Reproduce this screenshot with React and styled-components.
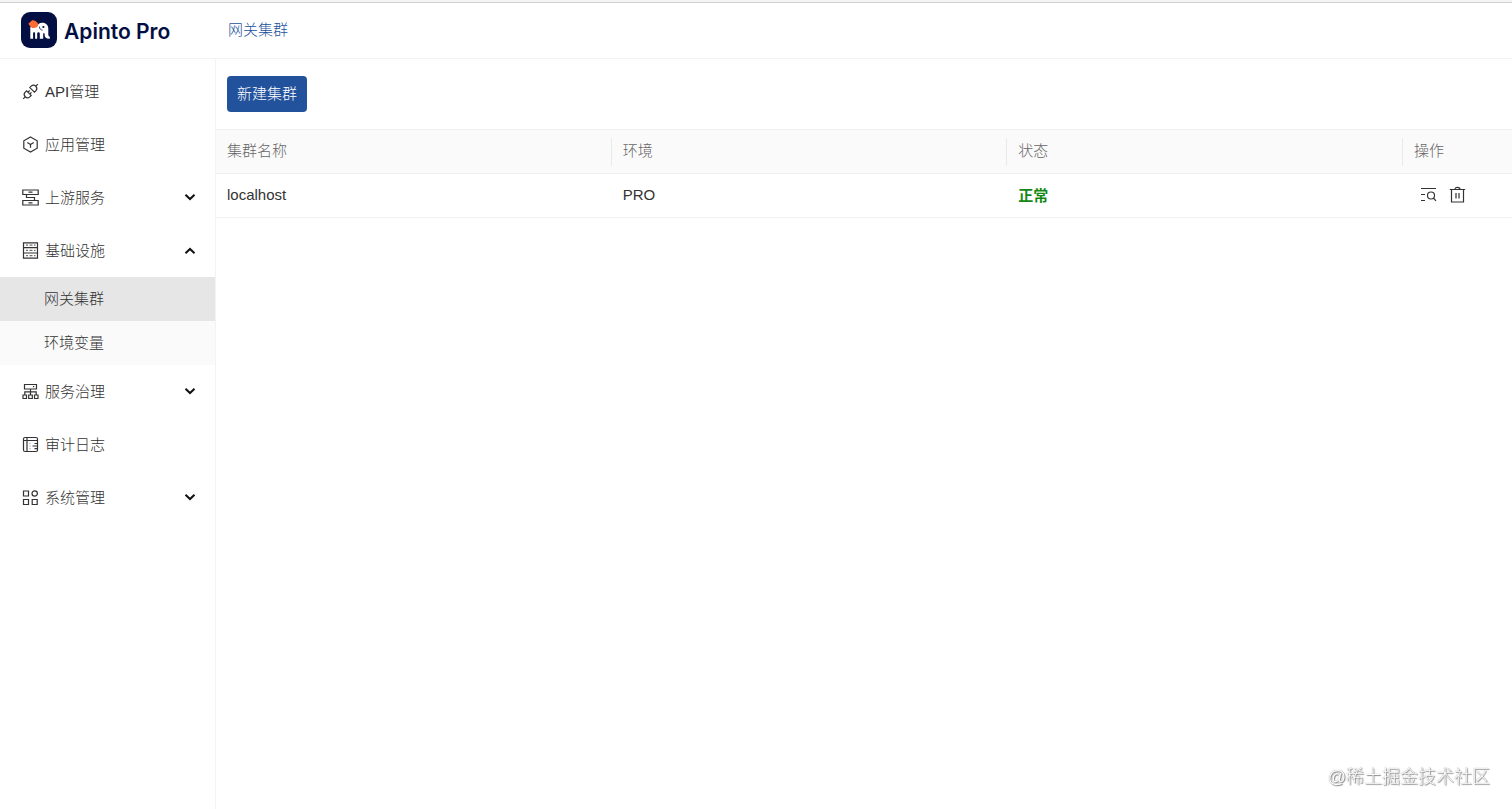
import React, { useState } from 'react'
import styled, { createGlobalStyle } from 'styled-components'

const menu = [
  { label: 'API管理', icon: 'plug' },
  { label: '应用管理', icon: 'app' },
  { label: '上游服务', icon: 'upstream', children: [] },
  { label: '基础设施', icon: 'infra', children: ['网关集群', '环境变量'] },
  { label: '服务治理', icon: 'tree', children: [] },
  { label: '审计日志', icon: 'log' },
  { label: '系统管理', icon: 'system', children: [] },
]

const clusters = [{ name: 'localhost', env: 'PRO', status: '正常' }]

const icons = {
  plug: (
    <>
      <path d="M1.2 15.8l2-2M13.8 3.200l2-2" />
      <path d="M3.200 13.800c-1.300-1.500-1.200-3.400 0-4.600l1.400-1.400 4.600 4.600-1.400 1.400c-1.200 1.200-3.100 1.400-4.600 0z" />
      <path d="M13.800 3.200c1.300 1.500 1.200 3.400 0 4.600l-1.400 1.400-4.600-4.600 1.400-1.400c1.200-1.200 3.100-1.400 4.600 0z" />
      <path d="M6 9.200l1.700-1.700M7.800 11l1.700-1.700" />
    </>
  ),
  app: (
    <>
      <path d="M8.5 1l6.700 3.800v7.400L8.5 16l-6.700-3.800V4.800z" />
      <path d="M5.300 6.500l3.200 2 3.200-2M8.5 8.500v3.300" />
    </>
  ),
  upstream: (
    <>
      <path d="M.8 1h15.400v4.500H.8zM.8 11.500h15.400V16H.8z" />
      <path d="M6.500 3.200h4M6.500 13.800h4M4.500 5.500v3h8v3" />
    </>
  ),
  infra: (
    <>
      <path d="M1.500 .8h14v4.900h-14zM1.500 5.700h14v5.300h-14zM1.500 11h14v5.200h-14z" />
      <path d="M4 3.200h2M7.500 3.200h3M12 3.200h1.500M4 8.400h2M7.500 8.400h3M12 8.400h1.500M4 13.600h2M7.500 13.600h3M12 13.600h1.500" opacity="0.7" />
    </>
  ),
  tree: (
    <>
      <path d="M2.500 1.500h12V6h-12zM8.500 6v6M2.800 12V8.800h11.400V12" />
      <path d="M1 12h3.500v3.500H1zM6.700 12h3.600v3.500H6.700zM12.500 12H16v3.500h-3.500zM11 3.700h1.200" />
    </>
  ),
  log: (
    <>
      <rect x="1.500" y="1.500" width="14" height="14" rx="1.500" />
      <path d="M5 1.500v14M1.500 4.500h14M12.500 7.500h3M10.500 10h5M12.500 12.700h3" />
      <path d="M7.500 7.500h1M7.500 10h1M7.500 12.700h1" opacity="0.5" />
    </>
  ),
  system: (
    <>
      <path d="M1.500 2h5v5h-5zM1.500 10.500h5v5h-5zM10.200 10.500h5v5h-5z" />
      <circle cx="12.700" cy="4.500" r="2.700" />
    </>
  ),
}

function Logo() {
  return (
    <svg width="36" height="36" viewBox="0 0 36 36" aria-hidden="true">
      <rect width="36" height="36" rx="9" fill="#030f43" />
      <path
        fill="#fff"
        d="M9.300 26.800V15h6.500c.8-2.800 2.800-4.300 5.600-4.300 3.700 0 5.800 2.500 5.900 5.800v5.900c0 1.300.5 1.900 1.500 2.200v2.200c-3.200.3-5.200-1.200-5.200-4v-1.600h-1.400v5.600h-3.400v-5.100c0-1-.5-1.500-1.300-1.500s-1.300.6-1.300 1.500v5.100h-2.100v-5.100c0-.9-.3-1.400-1-1.400s-1 .5-1 1.400v5.100z"
      />
      <path fill="none" stroke="#030f43" strokeWidth="0.8" d="M18.300 14.500c.1 2.200 1.300 3.400 3.300 3.700" />
      <circle cx="22.400" cy="15" r="1.100" fill="#030f43" />
      <path fill="#ff6b35" d="M7.300 11.800l3.600-3.200c1.800-.9 4.900 1 6.400 3.300-.4 2.700-1.900 4-4.300 4-1.600.1-2.700-.3-3.500-1.200z" />
    </svg>
  )
}

function Sidebar() {
  const [open, setOpen] = useState('基础设施')

  return (
    <Side>
      {menu.map(item => {
        const isOpen = open === item.label
        return (
          <div key={item.label}>
            <MenuButton type="button" onClick={() => setOpen(isOpen ? '' : item.label)}>
              <LineIcon viewBox="0 0 17 17">{icons[item.icon]}</LineIcon>
              <MenuLabel>{item.label}</MenuLabel>
              {item.children && (
                <Arrow viewBox="0 0 12 12">
                  <path d={isOpen ? 'M1.500 8.300L6 4l4.500 4.300' : 'M1.500 2.700L6 7l4.500-4.300'} />
                </Arrow>
              )}
            </MenuButton>
            {isOpen && item.children && item.children.map(child => (
              <SubLink key={child} href="#" $active={child === '网关集群'}>{child}</SubLink>
            ))}
          </div>
        )
      })}
    </Side>
  )
}

export default function App() {
  return (
    <Page>
      <GlobalStyle />
      <Header>
        <Brand href="#">
          <Logo />
          <BrandName>Apinto Pro</BrandName>
        </Brand>
        <Crumb href="#">网关集群</Crumb>
      </Header>
      <Body>
        <Sidebar />
        <Main>
          <Toolbar>
            <PrimaryButton type="button">新建集群</PrimaryButton>
          </Toolbar>
          <Table>
            <colgroup>
              <col />
              <col />
              <col />
              <ActionCol />
            </colgroup>
            <thead>
              <tr>
                <Th><HeadCell $divided>集群名称</HeadCell></Th>
                <Th><HeadCell $divided>环境</HeadCell></Th>
                <Th><HeadCell $divided>状态</HeadCell></Th>
                <Th><HeadCell>操作</HeadCell></Th>
              </tr>
            </thead>
            <tbody>
              {clusters.map(c => (
                <tr key={c.name}>
                  <Td>{c.name}</Td>
                  <Td>{c.env}</Td>
                  <Td><Status>{c.status}</Status></Td>
                  <Td>
                    <Actions>
                      <IconButton type="button" aria-label="查看">
                        <LineIcon viewBox="0 0 17 17">
                          <path d="M1 2.500h15M1 8.500h4M1 14.500h4" />
                          <circle cx="11" cy="9.500" r="3.500" />
                          <path d="M13.400 12l2.600 2.800" />
                        </LineIcon>
                      </IconButton>
                      <IconButton type="button" aria-label="删除">
                        <LineIcon viewBox="0 0 17 17">
                          <path d="M.8 3.500h15.400M2.500 3.500V16h12V3.500M7 7v5.500M10 7v5.500" />
                          <path d="M6 3.500c0-1.500.8-2.200 2.500-2.200s2.500.7 2.500 2.200" />
                        </LineIcon>
                      </IconButton>
                    </Actions>
                  </Td>
                </tr>
              ))}
            </tbody>
          </Table>
        </Main>
      </Body>
      <Watermark>@稀土掘金技术社区</Watermark>
    </Page>
  )
}

const GlobalStyle = createGlobalStyle`
  * {
    box-sizing: border-box;
  }
  body {
    margin: 0;
    background: #fff;
  }
  body, button {
    font-family: "Liberation Sans", "Noto Sans CJK SC", sans-serif;
    font-size: 15px;
    font-weight: 300;
    color: #333;
  }
`;

const Page = styled.div`
  min-height: 100vh;
  display: flex;
  flex-direction: column;
  border-top: 2px solid #f5f5f5;
`;

const Header = styled.header`
  height: 57px;
  padding-bottom: 2px;
  display: flex;
  align-items: center;
  border-top: 1px solid #d0d0d0;
  border-bottom: 1px solid #f3f3f3;
`;

const Brand = styled.a`
  width: 216px;
  padding-left: 21px;
  display: flex;
  align-items: center;
  gap: 7px;
  text-decoration: none;
`;

const BrandName = styled.span`
  padding-top: 3px;
  font-family: Inter, sans-serif;
  font-size: 21px;
  font-weight: 600;
  color: #030f43;
`;

const Crumb = styled.a`
  padding: 0 0 2px 12px;
  color: #22529c;
  text-decoration: none;
`;

const Body = styled.div`
  flex: 1;
  display: flex;
`;

const Side = styled.nav`
  flex: none;
  width: 216px;
  padding-top: 6px;
  border-right: 1px solid #f3f3f3;
`;

const MenuButton = styled.button`
  width: 100%;
  height: 53px;
  padding: 0 19px 0 22px;
  display: flex;
  align-items: center;
  gap: 6px;
  border: 0;
  background: none;
  text-align: left;
  cursor: pointer;
`;

const MenuLabel = styled.span`
  flex: 1;
  padding-bottom: 3px;
`;

const SubLink = styled.a`
  height: 44px;
  padding: 0 0 3px 44px;
  display: flex;
  align-items: center;
  background: ${props => props.$active ? '#e6e6e6' : '#fafafa'};
  color: #333;
  text-decoration: none;
`;

const LineIcon = styled.svg`
  flex: none;
  width: 17px;
  height: 17px;
  fill: none;
  stroke: #333;
  stroke-width: 1.2;
`;

const Arrow = styled.svg`
  width: 12px;
  height: 12px;
  fill: none;
  stroke: #111;
  stroke-width: 2;
`;

const Main = styled.main`
  flex: 1;
  min-width: 0;
`;

const Toolbar = styled.div`
  padding: 17px 11px;
`;

const PrimaryButton = styled.button`
  height: 36px;
  padding: 0 10px 4px;
  display: block;
  border: 0;
  border-radius: 4px;
  background: #22529c;
  color: #fff;
  cursor: pointer;
`;

const Table = styled.table`
  width: 100%;
  table-layout: fixed;
  border-collapse: separate;
  border-spacing: 0;
  border-top: 1px solid #f0f0f0;
`;

const ActionCol = styled.col`
  width: 109px;
`;

const Th = styled.th`
  height: 44px;
  padding: 0 0 0 11px;
  border-bottom: 1px solid #f0f0f0;
  background: #fafafa;
  color: #666;
  font-weight: 300;
  text-align: left;
`;

const HeadCell = styled.div`
  padding-bottom: 2px;
  line-height: 26px;
  border-right: ${props => props.$divided ? '1px solid #e9e9e9' : '0'};
`;

const Td = styled.td`
  height: 44px;
  padding: 0 0 2px 11px;
  border-bottom: 1px solid #f0f0f0;
`;

const Status = styled.span`
  color: #138913;
  font-weight: 700;
`;

const Actions = styled.div`
  display: flex;
  gap: 12px;
  padding-left: 6px;
`;

const IconButton = styled.button`
  padding: 0;
  display: flex;
  border: 0;
  background: none;
  cursor: pointer;
`;

const Watermark = styled.div`
  position: fixed;
  right: 22px;
  bottom: 21px;
  font-size: 18px;
  color: #fff;
  text-shadow: 0 0 1px #777, 1px 1px 1px #888;
`;
